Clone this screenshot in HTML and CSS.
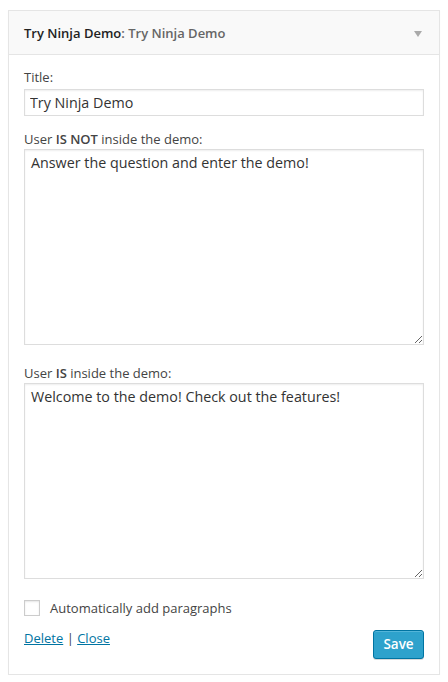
FILE: index.html
```html
<!DOCTYPE html>
<html>
<head>
<meta charset="utf-8">
<link rel="stylesheet" href="styles.css">
</head>
<body>
<div class="widget">
  <div class="widget-top">
    <h4 class="widget-title">Try Ninja Demo<span class="in-title">: Try Ninja Demo</span></h4>
    <span class="arrow"></span>
  </div>
  <div class="widget-inside">
    <div class="field">
      <label class="lbl">Title:</label>
      <input class="inp" type="text" value="Try Ninja Demo">
    </div>
    <div class="field field-ta">
      <label class="lbl">User <b>IS NOT</b> inside the demo:</label>
      <textarea class="ta">Answer the question and enter the demo!</textarea>
    </div>
    <div class="field field-ta">
      <label class="lbl">User <b>IS</b> inside the demo:</label>
      <textarea class="ta">Welcome to the demo! Check out the features!</textarea>
    </div>
    <div class="check-row">
      <span class="checkbox"></span>
      <span class="check-label">Automatically add paragraphs</span>
    </div>
    <div class="controls">
      <div class="links"><a href="#">Delete</a> | <a href="#">Close</a></div>
      <button class="save">Save</button>
    </div>
  </div>
</div>
</body>
</html>
```
FILE: styles.css
```css
html, body { margin: 0; padding: 0; background: #fff; }
body {
  padding: 10px 8px 0 8px;
  font-family: "Open Sans", "Liberation Sans", sans-serif;
  font-size: 13px;
  color: #444;
}
.widget {
  border: 1px solid #e5e5e5;
  box-shadow: 0 1px 1px rgba(0,0,0,.04);
  background: #fff;
}
.widget-top {
  height: 43px;
  background: #f9f9f9;
  border-bottom: 1px solid #e5e5e5;
  display: flex;
  align-items: center;
  justify-content: space-between;
  padding: 0 15px;
}
.widget-title {
  margin: 0;
  font-size: 13px;
  font-weight: 600;
  color: #222;
}
.in-title { color: #666; }
.arrow {
  width: 0; height: 0;
  border-left: 4px solid transparent;
  border-right: 4px solid transparent;
  border-top: 6px solid #aaa;
  margin-right: 2px;
  margin-top: 3px;
}
.widget-inside {
  padding: 13px 15px 15px;
}
.field { margin-bottom: 14px; }
.field-ta { margin-bottom: 19px; }
.lbl {
  display: block;
  line-height: 18px;
  margin-bottom: 3px;
  color: #444;
}
.field-ta .lbl { margin-bottom: 1px; }
.lbl b { font-weight: 600; }
.inp, .ta {
  display: block;
  width: 100%;
  box-sizing: border-box;
  margin: 0;
  border: 1px solid #ddd;
  box-shadow: inset 0 1px 2px rgba(0,0,0,.07);
  font-family: "Open Sans", "Liberation Sans", sans-serif;
  font-size: 14.3px;
  color: #333;
  background: #fff;
  outline: none;
}
.inp {
  height: 27px;
  padding: 3px 5px;
}
.ta {
  height: 196px;
  padding: 3px 6px;
  line-height: 20px;
  resize: vertical;
}
.check-row {
  display: flex;
  align-items: center;
  margin-top: 21px;
  height: 16px;
}
.checkbox {
  width: 14px; height: 14px;
  border: 1px solid #ccc;
  box-shadow: inset 0 1px 2px rgba(0,0,0,.1);
  background: #fff;
  margin-right: 10px;
}
.check-label { font-size: 13px; color: #444; }
.controls {
  display: flex;
  justify-content: space-between;
  align-items: flex-start;
  margin-top: 14px;
}
.links { color: #444; line-height: 18px; margin-top: -1px; }
.links a { color: #0074a2; text-decoration: underline; }
.save {
  height: 29px;
  width: 51px;
  padding: 0 0 1px;
  font-family: "Open Sans", "Liberation Sans", sans-serif;
  font-size: 13.5px;
  font-weight: 600;
  color: #fff;
  background: #2ea2cc;
  border: 1px solid #0074a2;
  border-radius: 3px;
  box-shadow: inset 0 1px 0 rgba(120,200,230,.5), 0 1px 0 rgba(0,0,0,.15);
}
```
